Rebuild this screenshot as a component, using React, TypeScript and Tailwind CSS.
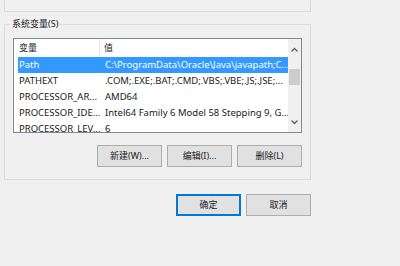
import React from "react";

const font = { fontFamily: "'Noto Sans', 'Noto Sans CJK SC', sans-serif" };

const rows = [
  ["Path", "C:\\ProgramData\\Oracle\\Java\\javapath;C..."],
  ["PATHEXT", ".COM;.EXE;.BAT;.CMD;.VBS;.VBE;.JS;.JSE;..."],
  ["PROCESSOR_AR...", "AMD64"],
  ["PROCESSOR_IDE...", "Intel64 Family 6 Model 58 Stepping 9, G..."],
  ["PROCESSOR_LEV...", "6"],
];

function Btn({ label, primary }: { label: string; primary?: boolean }) {
  return (
    <div
      className={
        "w-[65px] h-[22px] flex items-center justify-center bg-[#e1e1e1] text-[9px] text-[#1a1a1a] " +
        (primary ? "border-2 border-[#0078d7]" : "border border-[#adadad]")
      }
    >
      {label}
    </div>
  );
}

export default function App() {
  return (
    <div className="w-[400px] h-[266px] bg-[#f0f0f0] overflow-hidden" style={font}>
      <div className="ml-[4px] w-[307px] h-[12px] border-x border-b border-[#dcdcdc]" />
      <div className="relative ml-[4px] mt-[12px] w-[307px] h-[156px] border border-[#dcdcdc]">
        <div className="absolute left-[5px] top-[-8px] px-[2px] bg-[#f0f0f0] text-[9px] leading-[14px] text-[#1a1a1a]">
          系统变量(S)
        </div>
        <div className="ml-[8px] mt-[13px] w-[289px] h-[95px] border border-[#828790] bg-white flex overflow-hidden">
          <div className="flex-1 min-w-0 flex flex-col text-[9.5px] text-[#1a1a1a]">
            <div className="h-[18px] flex items-center shrink-0 text-[9px]">
              <div className="w-[86px] h-full flex items-center pl-[5px] border-r border-[#e5e5e5]">变量</div>
              <div className="pl-[4px]">值</div>
            </div>
            <div className="flex flex-col pl-[4px]">
              {rows.map(([k, v], i) => (
                <div
                  key={k}
                  className={
                    "h-[16px] flex items-center shrink-0 whitespace-nowrap overflow-hidden " +
                    (i === 0 ? "bg-[#3399ff] text-white" : "")
                  }
                >
                  <div className="w-[82px] shrink-0 pl-[1px]">{k}</div>
                  <div className="pl-[5px]">{v}</div>
                </div>
              ))}
            </div>
          </div>
          <div className="w-[13px] shrink-0 bg-[#f0f0f0] flex flex-col items-center">
            <svg width="9" height="16" viewBox="0 0 9 16" className="mt-[3px]">
              <path d="M1.5 9.5 L4.5 6.5 L7.5 9.5" stroke="#606060" strokeWidth="1.3" fill="none" />
            </svg>
            <div className="mt-[11px] w-[11px] h-[16px] bg-[#cdcdcd]" />
            <div className="flex-1" />
            <svg width="9" height="16" viewBox="0 0 9 16" className="mb-[2px]">
              <path d="M1.5 6.5 L4.5 9.5 L7.5 6.5" stroke="#606060" strokeWidth="1.3" fill="none" />
            </svg>
          </div>
        </div>
        <div className="mt-[12px] mr-[8px] flex justify-end gap-[5px]">
          <Btn label="新建(W)..." />
          <Btn label="编辑(I)..." />
          <Btn label="删除(L)" />
        </div>
      </div>
      <div className="mt-[14px] ml-[4px] w-[307px] flex justify-end gap-[5px]">
        <Btn label="确定" primary />
        <Btn label="取消" />
      </div>
    </div>
  );
}
